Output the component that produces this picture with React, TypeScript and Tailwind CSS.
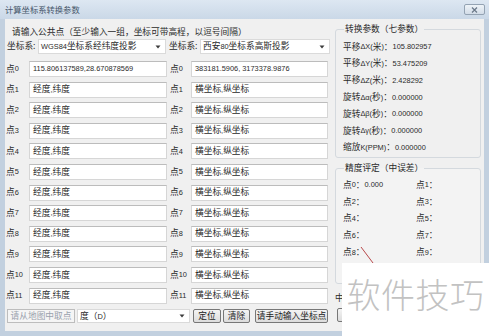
import React from 'react'

// split a label into CJK and latin runs, latin is drawn smaller (like Tahoma next to SimSun)
function Mix({ text }: { text: string }) {
  const parts = text.split(/([\x20-\x7e\u0370-\u03ff]+)/).filter(Boolean)
  return (
    <>
      {parts.map((p, i) =>
        /^[\x20-\x7e\u0370-\u03ff]+$/.test(p) ? (
          <span key={i} className="text-[7.4px] font-['Liberation_Sans',sans-serif] whitespace-pre">{p}</span>
        ) : (
          <span key={i}>{p}</span>
        )
      )}
    </>
  )
}

function Arrow() {
  return (
    <svg width="6" height="4" viewBox="0 0 6 4" className="shrink-0">
      <path d="M0.5 0.5 L5.5 0.5 L3 3.5 Z" fill="#3c3c3c" />
    </svg>
  )
}

function Combo({ text, className }: { text: string; className: string }) {
  return (
    <div className={`h-full bg-white border border-[#dadada] flex items-center justify-between pl-[2px] pr-[4px] whitespace-nowrap ${className}`}>
      <span><Mix text={text} /></span>
      <Arrow />
    </div>
  )
}

function Field({ value, className }: { value: string; className: string }) {
  return (
    <div className={`h-[16px] bg-white border border-[#d6d6d6] border-t-[#bcbcbc] flex items-center pl-[3px] whitespace-nowrap ${className}`}>
      <Mix text={value} />
    </div>
  )
}

function Btn({ text, className }: { text: string; className: string }) {
  return (
    <div className={`h-full border border-[#777] rounded-[2px] bg-gradient-to-b from-[#f4f4f4] to-[#dcdcdc] flex items-center justify-center text-[#222] whitespace-nowrap ${className}`}>
      {text}
    </div>
  )
}

const rows = Array.from({ length: 12 }, (_, i) => i)

const params = [
  '平移ΔX(米)：105.802957',
  '平移ΔY(米)：53.475209',
  '平移ΔZ(米)：2.428292',
  '旋转Δα(秒)：0.000000',
  '旋转Δβ(秒)：0.000000',
  '旋转Δγ(秒)：0.000000',
  '缩放K(PPM)：0.000000',
]

const precision = ['点0：0.000', '点1：', '点2：', '点3：', '点4：', '点5：', '点6：', '点7：', '点8：', '点9：']

export default function App() {
  return (
    <div className="w-[489px] h-[336px] relative overflow-hidden bg-[#c2d0df] text-[8.7px] text-[#2a2a2a] font-['Noto_Sans_CJK_SC','Noto_Sans',sans-serif] leading-none">
      {/* title bar */}
      <div className="h-[19px] flex items-start bg-gradient-to-b from-[#dde7f2] to-[#cad8e7]">
        <div className="pl-[5px] pt-[5px] text-[8.3px] text-[#46566a]">计算坐标系转换参数</div>
        <div className="ml-auto mr-[4px] mt-[4px] w-[21px] h-[11px] border border-[#94a3b3] rounded-[2px] bg-gradient-to-b from-[#eef3f8] to-[#d3dde8] flex items-center justify-center">
          <svg width="7" height="6" viewBox="0 0 7 6">
            <path d="M1 0.5 L6 5.5 M6 0.5 L1 5.5" stroke="#6a7888" strokeWidth="1.2" />
          </svg>
        </div>
      </div>

      {/* window body */}
      <div className="mx-[5px] h-[312px] bg-[#f0f0f0] flex">
        {/* left: point inputs */}
        <div className="w-[328px] flex flex-col">
          <div className="mt-[6px] h-[14px] pl-[7px] flex items-center">请输入公共点（至少输入一组，坐标可带高程，以逗号间隔）</div>
          <div className="h-[15px] flex items-center">
            <div className="w-[33px] pl-[2px]">坐标系:</div>
            <Combo text="WGS84坐标系经纬度投影" className="w-[128px]" />
            <div className="w-[34px] pl-[3px]">坐标系:</div>
            <Combo text="西安80坐标系高斯投影" className="w-[130px]" />
          </div>
          <div className="mt-[7px] flex flex-col">
            {rows.map((i) => (
              <div key={i} className="h-[20.6px] flex items-start">
                <div className="w-[24px] h-[16px] pl-[1px] flex items-center"><Mix text={`点${i}`} /></div>
                <Field value={i === 0 ? '115.806137589,28.670878569' : '经度,纬度'} className="w-[138px]" />
                <div className="w-[24px] h-[16px] pl-[3px] flex items-center"><Mix text={`点${i}`} /></div>
                <Field value={i === 0 ? '383181.5906, 3173378.9876' : '横坐标,纵坐标'} className="w-[137px]" />
              </div>
            ))}
          </div>
          <div className="mt-[1px] h-[14px] flex items-stretch">
            <div className="ml-[2px] w-[68px] border border-[#bdbdbd] bg-[#f5f5f5] text-[#9aa2ad] flex items-center justify-center whitespace-nowrap">请从地图中取点</div>
            <Combo text="度（D）" className="ml-[2px] w-[113px]" />
            <Btn text="定位" className="ml-[3px] w-[28px]" />
            <Btn text="清除" className="ml-[2px] w-[27px]" />
            <Btn text="请手动输入坐标点" className="ml-[5px] w-[73px]" />
          </div>
        </div>

        {/* right: parameters */}
        <div className="ml-[2px] w-[146px] flex flex-col">
          <fieldset className="mt-[4px] border border-[#d4d9de] rounded-[3px] pl-[7px] pb-[1px]">
            <legend className="ml-[1px] px-[1px] leading-[12px]">转换参数（七参数）</legend>
            <div className="pt-[3.6px]">
              {params.map((p) => (
                <div key={p} className="h-[16.8px] flex items-center whitespace-nowrap"><Mix text={p} /></div>
              ))}
            </div>
          </fieldset>
          <fieldset className="mt-[4px] h-[122px] border border-[#d4d9de] rounded-[3px] pl-[7px] bg-[#f3f3f3]">
            <legend className="ml-[1px] px-[1px] leading-[12px]">精度评定（中误差）</legend>
            <div className="pt-[2.6px] grid grid-cols-[73px_60px]">
              {precision.map((p) => (
                <div key={p} className="h-[16.8px] flex items-center whitespace-nowrap"><Mix text={p} /></div>
              ))}
            </div>
          </fieldset>
          <div className="mt-[7px] h-[15px] flex items-center">中</div>
          <div className="mt-[2px] h-[14px] flex">
            <div className="ml-[2px] w-[20px] h-full border border-[#777] rounded-[2px] bg-gradient-to-b from-[#f4f4f4] to-[#dcdcdc]" />
          </div>
        </div>
      </div>

      {/* pointer stroke left on the capture */}
      <svg className="absolute left-[359px] top-[246px]" width="16" height="18" viewBox="0 0 16 18">
        <path d="M2 1 L14 17" stroke="#b8484a" strokeWidth="1" />
      </svg>

      {/* watermark */}
      <div className="absolute right-0 bottom-0 w-[147px] h-[73px] bg-white flex items-center justify-center">
        <span className="text-[34px] font-light text-[#c2c2c2] tracking-[0.5px] -mt-[12px]">软件技巧</span>
      </div>
    </div>
  )
}
